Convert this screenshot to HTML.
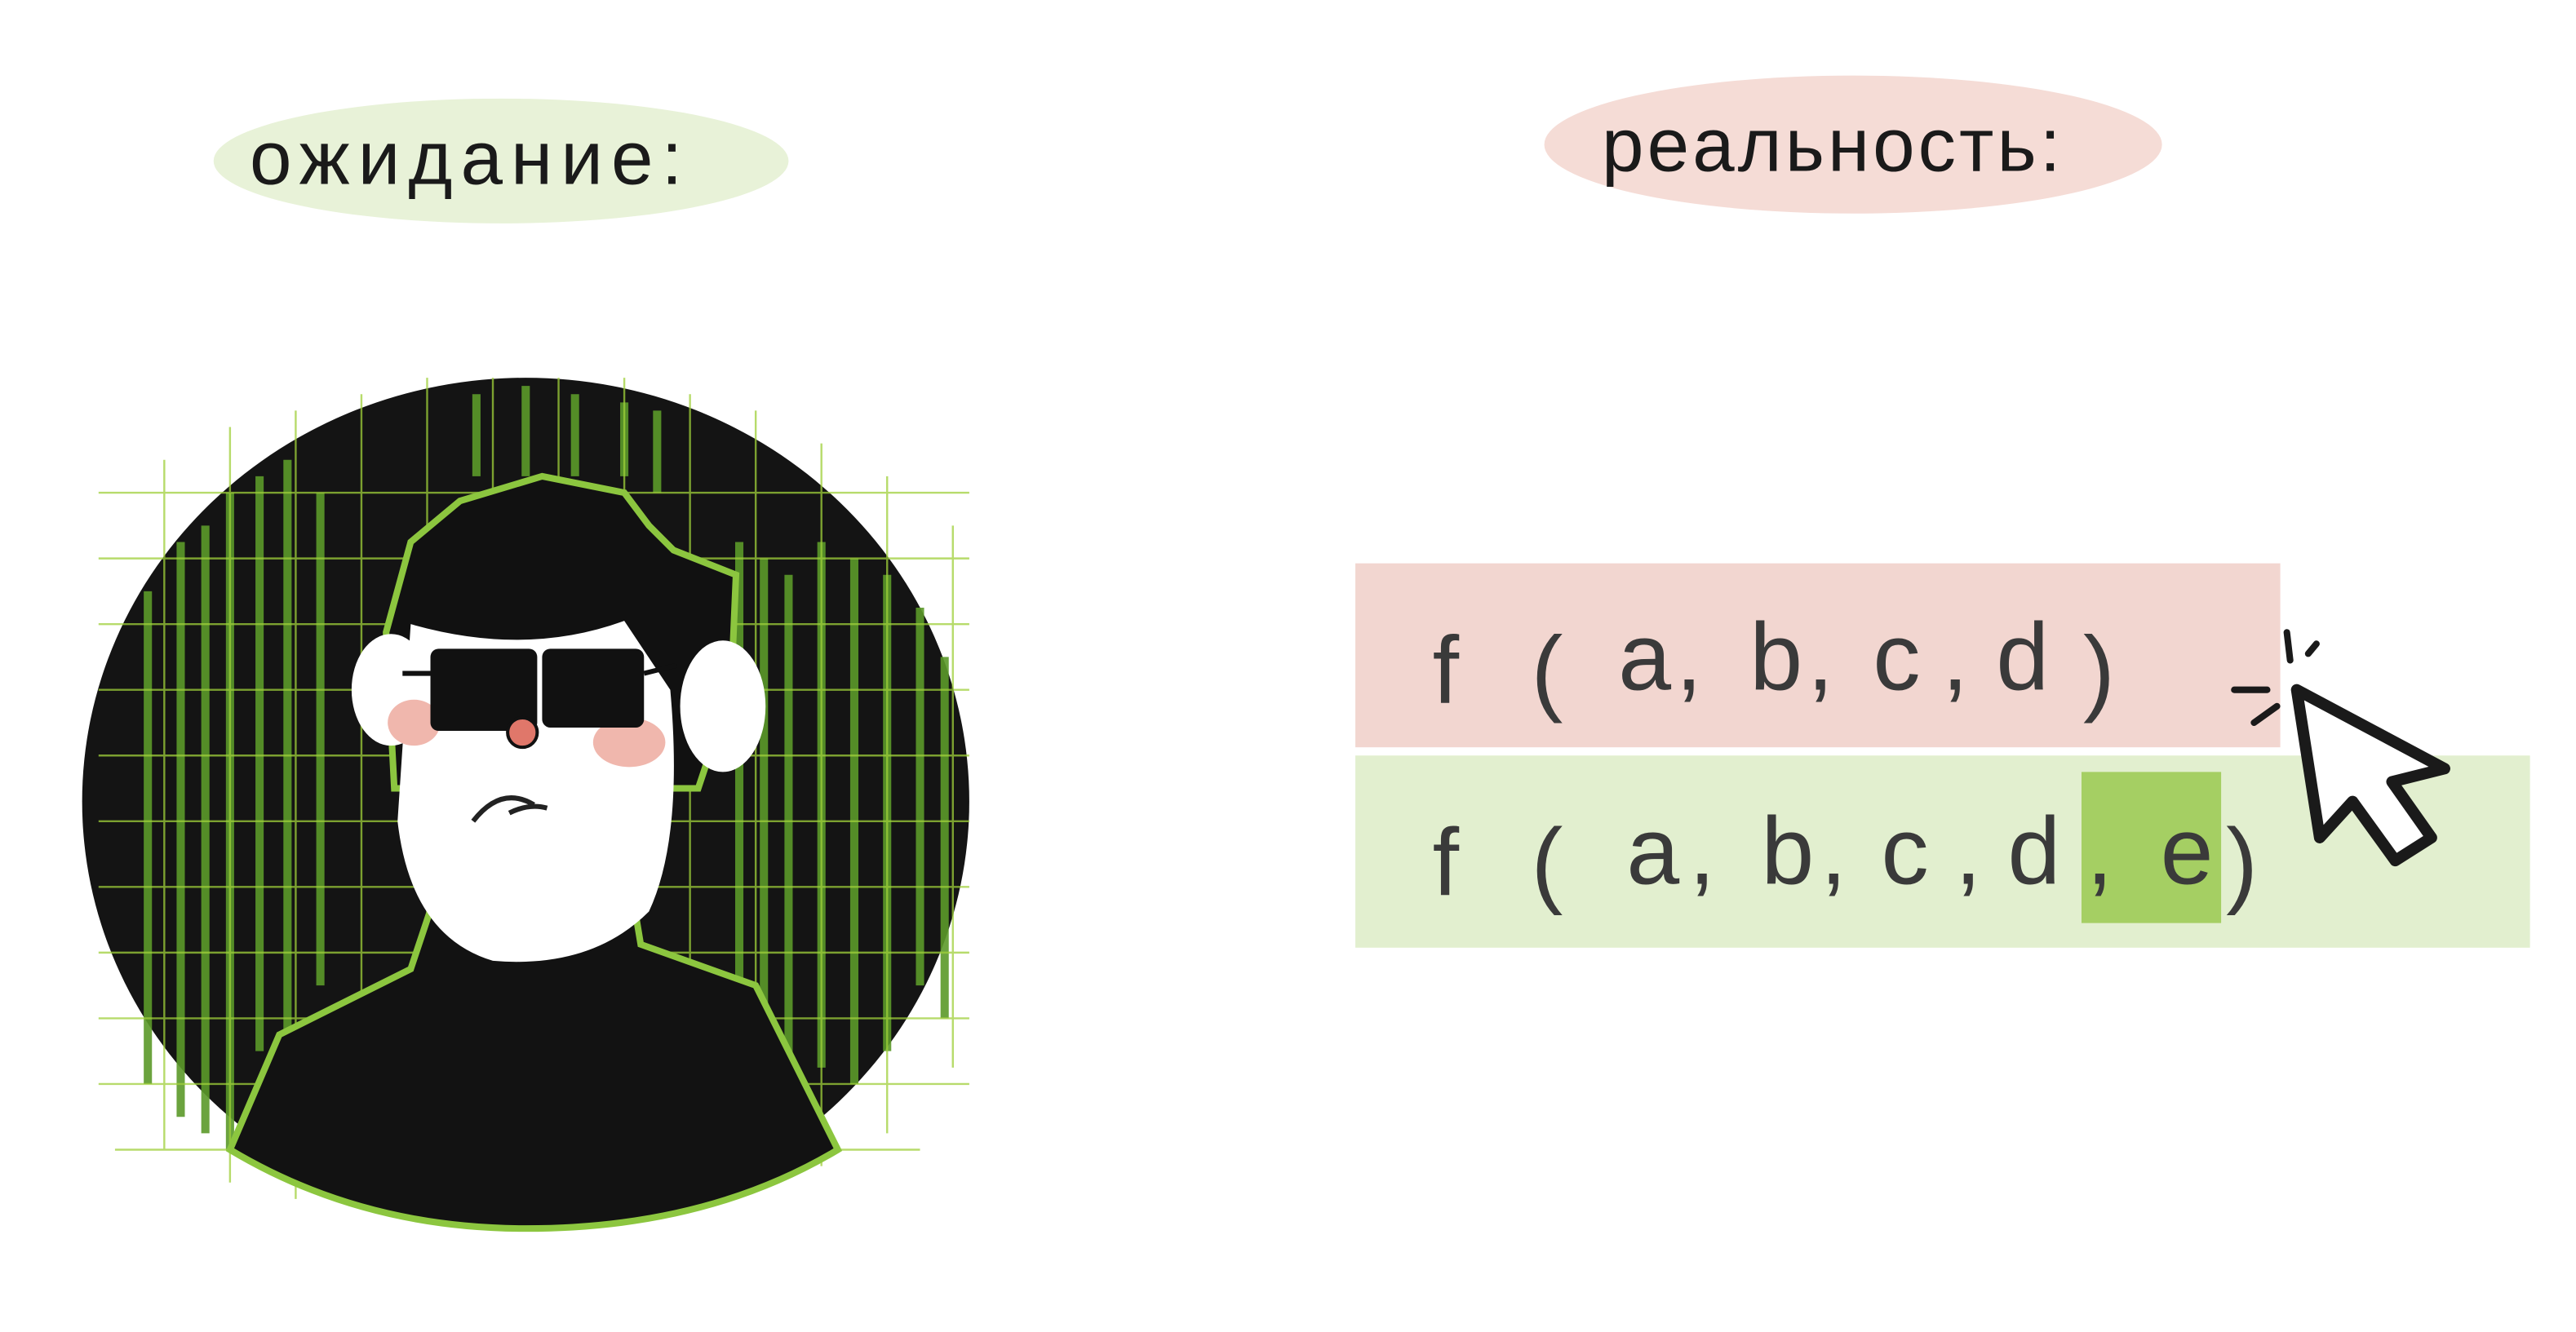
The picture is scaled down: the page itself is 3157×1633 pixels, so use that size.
<!DOCTYPE html>
<html><head><meta charset="utf-8"><style>
html,body{margin:0;padding:0;background:#fff;}
svg{display:block;}
text{font-family:"Liberation Sans","DejaVu Sans",sans-serif;}
</style></head><body>
<svg width="3157" height="1633" viewBox="0 0 1568 811" preserveAspectRatio="none" xmlns="http://www.w3.org/2000/svg">
<rect width="1568" height="811" fill="#fff"/>
<ellipse cx="305" cy="98" rx="175" ry="38" fill="#e8f2d8"/>
<text x="152" y="112" font-size="46" fill="#1a1a1a" letter-spacing="5">ожидание:</text>
<ellipse cx="1128" cy="88" rx="188" ry="42" fill="#f5dcd6"/>
<text x="975" y="104" font-size="46" fill="#1a1a1a" letter-spacing="2">реальность:</text>
<rect x="825" y="343" width="563" height="112" fill="#f2d6d0"/>
<rect x="825" y="460" width="715" height="117" fill="#e2efcf"/>
<rect x="1267" y="470" width="85" height="92" fill="#a5cf63"/>
<g font-size="58" fill="none" stroke="#3a3a3a" stroke-width="1.2">
<text x="872" y="428" fill="#3a3a3a" stroke="none">f</text>
<text x="932" y="428" fill="#3a3a3a" stroke="none">(</text>
<text x="985" y="420" fill="#3a3a3a" stroke="none">a</text>
<text x="1020" y="420" fill="#3a3a3a" stroke="none">,</text>
<text x="1065" y="420" fill="#3a3a3a" stroke="none">b</text>
<text x="1100" y="420" fill="#3a3a3a" stroke="none">,</text>
<text x="1140" y="420" fill="#3a3a3a" stroke="none">c</text>
<text x="1182" y="420" fill="#3a3a3a" stroke="none">,</text>
<text x="1215" y="420" fill="#3a3a3a" stroke="none">d</text>
<text x="1268" y="428" fill="#3a3a3a" stroke="none">)</text>
<text x="872" y="545" fill="#3a3a3a" stroke="none">f</text>
<text x="932" y="545" fill="#3a3a3a" stroke="none">(</text>
<text x="990" y="538" fill="#3a3a3a" stroke="none">a</text>
<text x="1028" y="538" fill="#3a3a3a" stroke="none">,</text>
<text x="1072" y="538" fill="#3a3a3a" stroke="none">b</text>
<text x="1108" y="538" fill="#3a3a3a" stroke="none">,</text>
<text x="1145" y="538" fill="#3a3a3a" stroke="none">c</text>
<text x="1190" y="538" fill="#3a3a3a" stroke="none">,</text>
<text x="1222" y="538" fill="#3a3a3a" stroke="none">d</text>
<text x="1270" y="538" fill="#3a3a3a" stroke="none">,</text>
<text x="1315" y="538" fill="#3a3a3a" stroke="none">e</text>
<text x="1355" y="545" fill="#3a3a3a" stroke="none">)</text>
</g>
<path d="M1398 420 L1412 510 L1432 488 L1458 524 L1480 510 L1456 476 L1488 468 Z" fill="#fff" stroke="#1a1a1a" stroke-width="7" stroke-linejoin="round"/>
<path d="M1360 420 L1380 420 M1372 440 L1386 430 M1392 385 L1394 402 M1405 398 L1410 392" stroke="#1a1a1a" stroke-width="4" stroke-linecap="round"/>
<!-- portrait -->
<ellipse cx="320" cy="488" rx="270" ry="258" fill="#141414"/>
<g stroke="#5c9a2a" stroke-width="5" opacity="0.9">
<path d="M90 360 V660 M110 330 V680 M125 320 V690 M140 300 V700 M158 290 V640 M175 280 V660 M195 300 V600 M450 330 V650 M465 340 V640 M480 350 V660 M500 330 V650 M520 340 V660 M540 350 V640 M560 370 V600 M575 400 V620 M290 240 V290 M320 235 V290 M350 240 V290 M380 245 V290 M400 250 V300"/>
</g>
<g stroke="#9fd03a" stroke-width="1.2" opacity="0.75">
<path d="M60 300 H590 M60 340 H590 M60 380 H590 M60 420 H590 M60 460 H590 M60 500 H590 M60 540 H590 M60 580 H590 M60 620 H590 M60 660 H590 M70 700 H560"/>
<path d="M100 280 V700 M140 260 V720 M180 250 V730 M220 240 V730 M260 230 V740 M300 230 V740 M340 230 V740 M380 230 V740 M420 240 V730 M460 250 V720 M500 270 V710 M540 290 V690 M580 320 V650"/>
</g>
<path d="M140 700 L170 630 L250 590 L265 545 L385 545 L390 575 L460 600 L510 700 Q430 748 320 748 Q220 748 140 700 Z" fill="#121212" stroke="#8cc63f" stroke-width="4"/>
<path d="M235 385 L250 330 L280 305 L330 290 L380 300 L395 320 L410 335 L448 350 L445 420 L425 480 L240 480 Z" fill="#111" stroke="#8cc63f" stroke-width="4"/>
<ellipse cx="238" cy="420" rx="24" ry="34" fill="#fff"/>
<ellipse cx="440" cy="430" rx="26" ry="40" fill="#fff"/>
<path d="M250 380 Q320 400 380 378 L408 420 Q416 510 395 555 Q360 590 300 585 Q250 570 242 500 Z" fill="#fff"/>
<ellipse cx="252" cy="440" rx="16" ry="14" fill="#f0b7ad"/>
<ellipse cx="383" cy="452" rx="22" ry="15" fill="#f0b7ad"/>
<rect x="262" y="395" width="65" height="50" rx="5" fill="#111"/>
<rect x="330" y="395" width="62" height="48" rx="5" fill="#111"/>
<path d="M245 410 L262 410 M392 410 L412 405" stroke="#111" stroke-width="3"/>
<circle cx="318" cy="446" r="9" fill="#e0776a" stroke="#111" stroke-width="2"/>
<path d="M288 500 Q305 478 325 490 M310 495 Q322 489 333 492" stroke="#222" stroke-width="3" fill="none"/>
</svg>
</body></html>
